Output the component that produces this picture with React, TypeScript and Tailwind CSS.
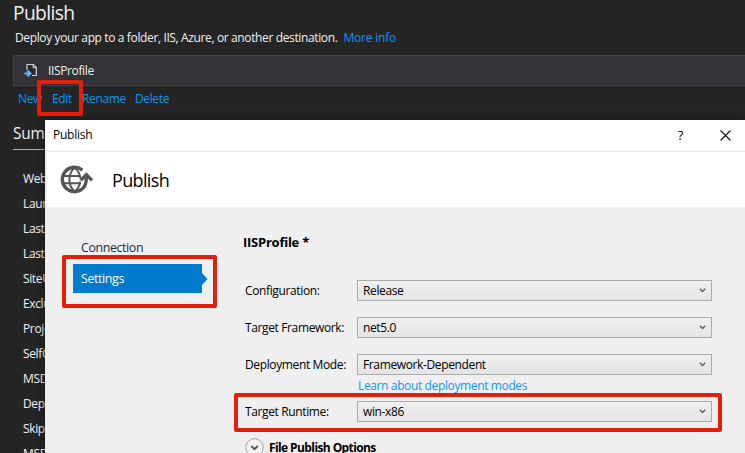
import React from "react";

const summaryRows = [
  "WebPublishMethod",
  "LaunchSiteAfterPublish",
  "LastUsedBuildConfig",
  "LastUsedPlatform",
  "SiteUrlToLaunch",
  "ExcludeApp_Data",
  "ProjectGuid",
  "SelfContained",
  "MSDeployServiceURL",
  "DeployIisAppPath",
  "SkipExtraFiles",
  "MSDeployMethod",
];

function ProfileIcon() {
  return (
    <svg width="14" height="15" viewBox="0 0 14 15" className="shrink-0">
      <path d="M3 7V1.5H9.5L12.3 4.5V12.5H8" fill="#2a2a2d" stroke="#d4d4d4" strokeWidth="1.2" />
      <path d="M9 1.5V4.7H12.3" fill="none" stroke="#d4d4d4" strokeWidth="1" />
      <path d="M0.5 10.5H5.5M3.5 7.7L6.5 10.5L3.5 13.3" fill="none" stroke="#6cb8f5" strokeWidth="2" />
    </svg>
  );
}

function GlobeIcon() {
  return (
    <svg width="34" height="30" viewBox="0 0 34 30" className="shrink-0" fill="none" stroke="#555557">
      <path d="M22.3 5.1A12.2 12.2 0 1 0 22.4 23.8C25.2 21.5 26.4 18.5 26.4 12" strokeWidth="3.4" />
      <path d="M14.7 2.8C7.6 8.5 7.6 20.5 14.7 26.5M14.7 2.8C18 5.5 19.9 9.5 20 13M14.7 26.5C18 24 19.6 21 20 16.5" strokeWidth="2" />
      <path d="M3.5 11H20.5M3.5 18.2H21" strokeWidth="2" />
      <path d="M20.6 15.4L26.4 9.5L32 15.4" strokeWidth="3.3" />
    </svg>
  );
}

function Select({ value }: { value: string }) {
  return (
    <div className="flex h-[21px] w-[355px] shrink-0 items-center justify-between border border-[#acacac] bg-linear-to-b from-[#f0f0f0] to-[#e4e4e4] pl-[5px] pr-[5px]">
      <span>{value}</span>
      <svg width="7" height="5" viewBox="0 0 7 5">
        <path d="M0.8 0.8L3.5 3.5L6.2 0.8" fill="none" stroke="#606060" strokeWidth="1.5" />
      </svg>
    </div>
  );
}

function Field({ label, value }: { label: string; value: string }) {
  return (
    <div className="flex h-[21px] items-center">
      <span className="w-[112px] shrink-0">{label}</span>
      <Select value={value} />
    </div>
  );
}

export default function App() {
  return (
    <div className="relative h-[453px] w-[745px] overflow-hidden whitespace-nowrap bg-[#252526] font-['Open_Sans','Noto_Sans',sans-serif] text-[12px] leading-4 tracking-[-0.37px] text-[#f1f1f1]">
      <main className="flex flex-col">
        <h1 className="ml-[13px] h-[30px] pt-px text-[19.2px] leading-6 tracking-[-0.6px]">Publish</h1>
        <p className="ml-[15px] flex h-[25px] gap-[6px]">
          <span>Deploy your app to a folder, IIS, Azure, or another destination.</span>
          <a className="tracking-[-0.2px] text-[#0097fb]">More info</a>
        </p>
        <div className="ml-[13px] flex h-[31px] items-center border-y border-l border-[#434346] bg-[#333337] pl-[10px]">
          <ProfileIcon />
          <span className="ml-[10px]">IISProfile</span>
        </div>
        <nav className="ml-[18px] mt-[5px] flex text-[#0097fb]">
          <a className="w-[34px]">New</a>
          <a className="w-[30px]">Edit</a>
          <a className="w-[53px]">Rename</a>
          <a>Delete</a>
        </nav>
        <h2 className="ml-[13px] mt-[15px] h-[28px] border-b border-[#b0b0b0] text-[15.4px] leading-6 tracking-[-0.2px]">Summary</h2>
        <ul className="ml-[23px] mt-[16px]">
          {summaryRows.map((row) => (
            <li key={row} className="flex h-[25px] items-center">{row}</li>
          ))}
        </ul>
      </main>

      <section className="absolute left-[45px] top-[120px] flex h-[333px] w-[700px] flex-col bg-[#efefef] text-black shadow-[0_0_7px_#0008]">
        <div className="flex h-[30px] shrink-0 items-center bg-white pl-2 pr-[14px]">
          <span className="flex-1 tracking-[-0.25px]">Publish</span>
          <span className="mr-[37px] text-[13px]">?</span>
          <svg width="11" height="11" viewBox="0 0 11 11">
            <path d="M0.5 0.5L10.5 10.5M10.5 0.5L0.5 10.5" stroke="#111" strokeWidth="1.1" />
          </svg>
        </div>
        <header className="ml-0.5 mt-0.5 flex h-[55px] shrink-0 items-center bg-white pl-[13px]">
          <GlobeIcon />
          <span className="ml-[18px] pt-px text-[18px] leading-6 tracking-[-0.65px]">Publish</span>
        </header>
        <div className="flex flex-1">
          <aside className="w-[198px] shrink-0 pl-7 pt-[26px] text-[12.4px] tracking-[-0.38px] text-[#1e2b4a]">
            <div className="flex h-[31px] items-center pb-px pl-2">Connection</div>
            <div className="flex h-[29px] items-center">
              <span className="flex h-[29px] w-[129px] items-center bg-[#007acc] pl-2 text-white">Settings</span>
              <svg width="6" height="12" viewBox="0 0 6 12">
                <path d="M0 0L5.5 6L0 12Z" fill="#007acc" />
              </svg>
            </div>
          </aside>
          <div className="flex flex-col pl-[2px] pt-[27px]">
            <h3 className="-ml-[2px] h-[46px] text-[13px] font-bold tracking-[-0.25px]">IISProfile *</h3>
            <div className="flex flex-col gap-4">
              <Field label="Configuration:" value="Release" />
              <Field label="Target Framework:" value="net5.0" />
              <Field label="Deployment Mode:" value="Framework-Dependent" />
            </div>
            <a className="ml-[113px] mt-[3px] h-[23px] text-[#0e97f5]">Learn about deployment modes</a>
            <Field label="Target Runtime:" value="win-x86" />
            <div className="mt-4 flex h-[19px] items-center">
              <svg width="19" height="19" viewBox="0 0 19 19">
                <circle cx="9.5" cy="9.5" r="8.8" fill="#f2f2f2" stroke="#a5a5a5" />
                <path d="M6.3 8L9.5 11.2L12.7 8" fill="none" stroke="#555" strokeWidth="2" />
              </svg>
              <span className="ml-[5px] pt-px font-bold tracking-[-0.6px]">File Publish Options</span>
            </div>
          </div>
        </div>
      </section>

      <div className="absolute left-[37px] top-[80px] h-[36px] w-[46px] rounded-[2px] border-4 border-[#e11f0b]" />
      <div className="absolute left-[62px] top-[255px] h-[53px] w-[155px] rounded-[2px] border-4 border-[#e11f0b]" />
      <div className="absolute left-[234px] top-[393px] h-[39px] w-[488px] rounded-[2px] border-4 border-[#e11f0b]" />
    </div>
  );
}
